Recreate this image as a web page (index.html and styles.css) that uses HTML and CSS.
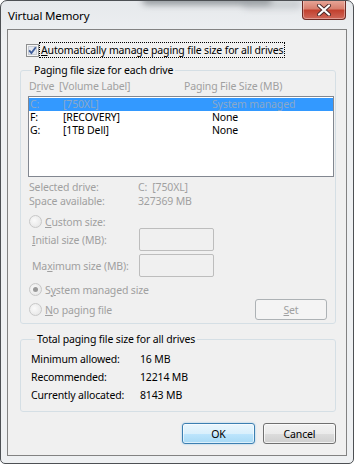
FILE: index.html
```html
<!DOCTYPE html>
<html lang="en">
<head>
  <meta charset="UTF-8" />
  <title>Virtual Memory</title>
  <link rel="stylesheet" href="styles.css">
</head>
<body>
  <div class="window">
    <div class="titlebar">
      <span class="glass glass-a"></span>
      <span class="glass glass-b"></span>
      <span class="title">Virtual Memory</span>
      <button class="close" aria-label="Close">
        <svg width="16" height="12" viewBox="0 0 16 12">
          <path d="M3 1.5 L13 10.5 M13 1.5 L3 10.5" stroke="#4a2a2a" stroke-width="4" stroke-linecap="round"/>
          <path d="M3 1.5 L13 10.5 M13 1.5 L3 10.5" stroke="#fff" stroke-width="2.2" stroke-linecap="round"/>
        </svg>
      </button>
    </div>

    <div class="client">
      <label class="auto-row">
        <span class="checkbox">
          <svg width="13" height="13" viewBox="0 0 13 13">
            <rect x="0.5" y="0.5" width="12" height="12" fill="#f4f4f4" stroke="#8e8f8f"/>
            <rect x="2.5" y="2.5" width="8" height="8" fill="#e3e7ee" stroke="#c8ccd4"/>
            <path d="M3.2 6.4 L5.4 9 L9.8 3.2" fill="none" stroke="#3e5c9a" stroke-width="1.8"/>
          </svg>
        </span>
        <span class="focus"><u>A</u>utomatically manage paging file size for all drives</span>
      </label>

      <fieldset class="group drives">
        <legend>Paging file size for each drive</legend>
        <div class="list-head">
          <span>D<u>r</u>ive</span>
          <span>[Volume Label]</span>
          <span>Paging File Size (MB)</span>
        </div>
        <div class="listbox">
          <div class="row selected"><span>C:</span><span>[750XL]</span><span>System managed</span></div>
          <div class="row"><span>F:</span><span>[RECOVERY]</span><span>None</span></div>
          <div class="row"><span>G:</span><span>[1TB Dell]</span><span>None</span></div>
        </div>

        <div class="info">
          <span>Selected drive:</span><span>C:&nbsp; [750XL]</span>
          <span>Space available:</span><span>327369 MB</span>
        </div>

        <div class="radio-row custom">
          <span class="radio"></span>
          <span><u>C</u>ustom size:</span>
        </div>
        <div class="size-grid">
          <span><u>I</u>nitial size (MB):</span><span class="textbox"></span>
          <span>Ma<u>x</u>imum size (MB):</span><span class="textbox"></span>
        </div>

        <div class="radio-row system">
          <span class="radio checked"></span>
          <span>S<u>y</u>stem managed size</span>
        </div>
        <div class="radio-row none">
          <span class="radio"></span>
          <span><u>N</u>o paging file</span>
          <button class="btn set" disabled><u>S</u>et</button>
        </div>
      </fieldset>

      <fieldset class="group totals">
        <legend>Total paging file size for all drives</legend>
        <div class="total-grid">
          <span>Minimum allowed:</span><span>16 MB</span>
          <span>Recommended:</span><span>12214 MB</span>
          <span>Currently allocated:</span><span>8143 MB</span>
        </div>
      </fieldset>

      <div class="actions">
        <button class="btn ok">OK</button>
        <button class="btn">Cancel</button>
      </div>
    </div>
  </div>
</body>
</html>
```

FILE: styles.css
```css
* {
  box-sizing: border-box;
  margin: 0;
  padding: 0;
}

body {
  font-family: "Noto Sans", sans-serif;
  font-size: 10.5px;
  letter-spacing: -0.15px;
  color: #000;
  background: #fff;
  width: 354px;
  height: 464px;
  overflow: hidden;
}

u {
  text-decoration-thickness: 1px;
  text-underline-offset: 1px;
}

.window {
  height: 464px;
  border: 1px solid #4d5054;
  border-radius: 7px 7px 5px 5px;
  background: linear-gradient(#e6e9ec, #eef0f2 40px);
  padding: 0 6px 7px;
  display: flex;
  flex-direction: column;
  overflow: hidden;
}

.titlebar {
  height: 28px;
  position: relative;
  display: flex;
  align-items: center;
  padding-left: 1px;
}

.title {
  position: relative;
  font-size: 11.5px;
  color: #000;
}

.glass {
  position: absolute;
  top: -6px;
  height: 10px;
  border-radius: 5px;
  filter: blur(3px);
}

.glass-a {
  left: 135px;
  width: 130px;
  background: rgba(90, 95, 100, 0.55);
}

.glass-b {
  left: 235px;
  width: 60px;
  top: -2px;
  background: rgba(150, 155, 160, 0.35);
}

.close {
  position: absolute;
  top: -1px;
  right: 1px;
  width: 44px;
  height: 20px;
  border: 1px solid #6d2a24;
  border-top: none;
  border-radius: 0 0 4px 4px;
  background: linear-gradient(#e9a99b, #d8806f 45%, #c2412f 55%, #d0685a);
  box-shadow: inset 0 0 0 1px rgba(255, 255, 255, 0.35);
  display: flex;
  align-items: center;
  justify-content: center;
}

.client {
  flex: 1;
  border: 1px solid #828282;
  background: #f0f0f0;
  padding: 0 10px 0 12px;
  display: flex;
  flex-direction: column;
}

.auto-row {
  margin-top: 12px;
  height: 16px;
  display: flex;
  align-items: center;
  padding-left: 6px;
}

.checkbox {
  display: flex;
  width: 13px;
  height: 13px;
}

.focus {
  margin-left: 1px;
  padding: 0 1px;
  line-height: 14px;
  outline: 1px dotted #000;
  outline-offset: 0;
}

.group {
  border: 1px solid #d5dfe5;
  border-radius: 3px;
  min-inline-size: auto;
}

.group legend {
  margin-left: 4px;
  padding: 0 2px;
  line-height: 14px;
}

.drives {
  margin-top: 5px;
  padding: 2px 1px 3px 7px;
  color: #a0a0a0;
}

.drives legend {
  color: #000;
}

.list-head {
  display: grid;
  grid-template-columns: 30px 125px auto;
  padding-left: 1px;
  line-height: 14px;
}

.listbox {
  margin-top: 3px;
  height: 81px;
  border: 1px solid #828790;
  background: #fff;
  padding: 1px 0;
  color: #000;
}

.row {
  display: grid;
  grid-template-columns: 33px 149px auto;
  padding-left: 1px;
  line-height: 13px;
}

.row.selected {
  background: #3399ff;
  color: #8aa8c8;
}

.info {
  margin-top: 3px;
  display: grid;
  grid-template-columns: 109px auto;
  padding-left: 1px;
  line-height: 14px;
}

.radio-row {
  display: flex;
  align-items: center;
  padding-left: 1px;
}

.radio {
  width: 13px;
  height: 13px;
  border-radius: 50%;
  border: 1px solid #c8c8c8;
  background: radial-gradient(circle at 40% 40%, #fafafa, #e2e2e2);
  margin-right: 3px;
  display: flex;
  align-items: center;
  justify-content: center;
}

.radio.checked::after {
  content: "";
  width: 5px;
  height: 5px;
  border-radius: 50%;
  background: #9a9a9a;
}

.custom {
  margin-top: 7px;
  height: 13px;
}

.size-grid {
  display: grid;
  grid-template-columns: 107px 75px;
  grid-auto-rows: 23px;
  row-gap: 3px;
  align-items: center;
  padding-left: 4px;
}

.textbox {
  height: 23px;
  border: 1px solid #bdbdbd;
  border-radius: 2px;
  background: #f0f0f0;
}

.system {
  margin-top: 6px;
  height: 13px;
}

.none {
  margin-top: 3px;
  height: 21px;
}

.btn {
  font-family: inherit;
  font-size: inherit;
  letter-spacing: inherit;
  width: 73px;
  height: 21px;
  border: 1px solid #707070;
  border-radius: 3px;
  color: #000;
  background: linear-gradient(#f2f2f2, #ebebeb 50%, #dddddd 50%, #cfcfcf);
  box-shadow: inset 0 0 0 1px rgba(255, 255, 255, 0.7);
}

.set {
  margin-left: auto;
  margin-right: 7px;
  width: 72px;
  border-color: #adb2b5;
  background: #f4f4f4;
  color: #a0a0a0;
  box-shadow: none;
}

.totals {
  margin-top: 8px;
  padding: 4px 0 7px 10px;
}

.total-grid {
  display: grid;
  grid-template-columns: 109px auto;
  line-height: 18px;
}

.actions {
  margin-top: 11px;
  display: flex;
  justify-content: flex-end;
  gap: 8px;
}

.ok {
  border-color: #3c7fb1;
  background: linear-gradient(#eaf6fd, #d9f0fc 50%, #bee6fd 50%, #a7d9f5);
  box-shadow: inset 0 0 0 1px rgba(255, 255, 255, 0.6), 0 0 2px rgba(60, 160, 230, 0.5);
}
```
